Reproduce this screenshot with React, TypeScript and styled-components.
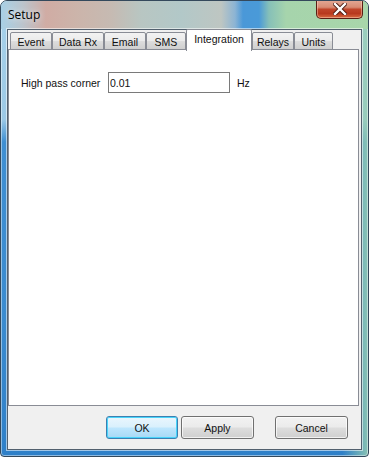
import React from "react";
import { useState } from "react";
import { styled, createGlobalStyle } from "styled-components";

const GlobalStyle = createGlobalStyle`
  html, body {
    margin: 0;
    padding: 0;
    background: #ffffff;
  }
  body {
    font-family: "Liberation Sans", Arial, sans-serif;
    font-size: 10.5px;
    color: #000000;
  }
`;

const Window = styled.div`
  position: relative;
  width: 369px;
  height: 457px;
  box-sizing: border-box;
  border: 1px solid #34495c;
  border-radius: 7px 7px 4px 4px;
  overflow: hidden;
  display: flex;
  flex-direction: column;
  background:
    linear-gradient(90deg, rgba(168, 212, 168, 0) 0, rgba(168, 212, 168, 0) 93%, rgba(150, 205, 175, 0.85) 100%),
    linear-gradient(180deg, #a8d2ea 0%, #9cc9e6 26%, #3f8fd2 31%, #3b8bcf 70%, #2f80c8 100%);
  box-shadow: inset 0 0 0 1px rgba(255, 255, 255, 0.45);
`;

const TitleBar = styled.div`
  height: 28px;
  flex: none;
  display: flex;
  align-items: flex-start;
  justify-content: space-between;
  padding-left: 7px;
  background: linear-gradient(
    90deg,
    #a8d0e6 0px,
    #bcc4cc 22px,
    #d0aca4 45px,
    #ccb4aa 75px,
    #c6bab2 110px,
    #b8c6c2 140px,
    #b2c8c8 180px,
    #bec6c2 220px,
    #8cb4d4 234px,
    #4a98d8 242px,
    #4a9ad8 258px,
    #86c0b8 268px,
    #a6d4ac 285px,
    #a8d6aa 369px
  );
`;

const Title = styled.span`
  font-family: "Open Sans", "Liberation Sans", sans-serif;
  font-size: 12px;
  line-height: 12px;
  color: #000000;
  margin-top: 8px;
  text-shadow: 0 0 6px rgba(255, 255, 255, 0.9);
`;

const CloseButton = styled.button`
  width: 47px;
  height: 19px;
  margin: -1px 5px 0 0;
  padding: 0;
  border: 1px solid #5a1f14;
  border-top: none;
  border-radius: 0 0 5px 5px;
  background: linear-gradient(
    180deg,
    #e3a996 0%,
    #d88c74 40%,
    #c0452a 52%,
    #b8391e 75%,
    #d86a40 100%
  );
  box-shadow: inset 0 0 0 1px rgba(255, 220, 200, 0.45);
  display: flex;
  align-items: center;
  justify-content: center;
  cursor: default;
`;

const Client = styled.div`
  flex: none;
  margin: 0 6px;
  height: 421px;
  box-sizing: border-box;
  border: 1px solid #52606e;
  background: #f0f0f0;
  box-shadow: 0 0 0 1px rgba(255, 255, 255, 0.55);
  display: flex;
  flex-direction: column;
`;

const TabStrip = styled.div`
  height: 20px;
  display: flex;
  align-items: flex-end;
  padding-left: 2px;
  position: relative;
  z-index: 1;
`;

const Tab = styled.div<{ $active?: boolean; $w: number }>`
  width: ${({ $w }) => $w}px;
  box-sizing: border-box;
  height: ${({ $active }) => ($active ? "22px" : "18px")};
  margin-bottom: ${({ $active }) => ($active ? "-1px" : "0")};
  border: 1px solid #898c95;
  border-bottom: ${({ $active }) => ($active ? "none" : "1px solid #898c95")};
  border-radius: 2px 2px 0 0;
  background: ${({ $active }) =>
    $active
      ? "#ffffff"
      : "linear-gradient(180deg, #f2f2f2 0%, #ebebeb 48%, #dddddd 52%, #cfcfcf 100%)"};
  display: flex;
  align-items: ${({ $active }) => ($active ? "flex-start" : "center")};
  justify-content: center;
  padding-top: ${({ $active }) => ($active ? "3px" : "1px")};
  font-size: 10.5px;
  color: #111111;
  white-space: nowrap;
  cursor: default;
`;

const Panel = styled.div`
  height: 357px;
  box-sizing: border-box;
  margin-right: 2px;
  margin-top: -1px;
  border: 1px solid #898c95;
  background: #ffffff;
  padding: 22px 0 0 12px;
`;

const FieldRow = styled.div`
  display: flex;
  align-items: center;
  height: 21px;
`;

const FieldLabel = styled.label`
  font-size: 10.5px;
  width: 87px;
  color: #111111;
`;

const TextInput = styled.input`
  width: 122px;
  height: 21px;
  box-sizing: border-box;
  border: 1px solid #7a7a7a;
  padding: 0 1px;
  font-family: "Liberation Sans", Arial, sans-serif;
  font-size: 10.5px;
  color: #111111;
  outline: none;
`;

const Unit = styled.span`
  font-size: 10.5px;
  margin-left: 7px;
  color: #111111;
`;

const ButtonRow = styled.div`
  display: flex;
  justify-content: flex-end;
  align-items: flex-start;
  padding: 10px 13px 0 0;
`;

const Button = styled.button<{ $default?: boolean; $gap?: number }>`
  width: ${({ $default }) => ($default ? "72px" : "73px")};
  height: 23px;
  margin-left: ${({ $gap }) => $gap ?? 0}px;
  box-sizing: border-box;
  border: 1px solid ${({ $default }) => ($default ? "#3c7fb1" : "#707070")};
  border-radius: 3px;
  background: ${({ $default }) =>
    $default
      ? "linear-gradient(180deg, #eaf6fd 0%, #d9f0fc 48%, #bee6fd 52%, #a7d9f5 100%)"
      : "linear-gradient(180deg, #f2f2f2 0%, #ebebeb 48%, #dddddd 52%, #cfcfcf 100%)"};
  box-shadow: inset 0 0 0 1px
    ${({ $default }) => ($default ? "#48d4fa" : "rgba(255, 255, 255, 0.7)")};
  font-family: "Liberation Sans", Arial, sans-serif;
  font-size: 10.5px;
  color: #111111;
  padding: 0;
  cursor: default;
`;

const tabs = [
  { label: "Event", w: 42 },
  { label: "Data Rx", w: 52 },
  { label: "Email", w: 42 },
  { label: "SMS", w: 40 },
  { label: "Integration", w: 66 },
  { label: "Relays", w: 42 },
  { label: "Units", w: 39 },
];

const CloseGlyph: React.FC = () => (
  <svg width="14" height="12" viewBox="0 0 14 12">
    <path
      d="M2 1 L12 11 M12 1 L2 11"
      stroke="#4a1a10"
      strokeWidth="4.2"
      strokeLinecap="square"
    />
    <path
      d="M2 1 L12 11 M12 1 L2 11"
      stroke="#ffffff"
      strokeWidth="2.4"
      strokeLinecap="square"
    />
  </svg>
);

const App: React.FC = () => {
  const [activeTab, setActiveTab] = useState<string>("Integration");
  const [corner, setCorner] = useState<string>("0.01");

  return (
    <>
      <GlobalStyle />
      <Window>
        <TitleBar>
          <Title>Setup</Title>
          <CloseButton aria-label="Close">
            <CloseGlyph />
          </CloseButton>
        </TitleBar>
        <Client>
          <TabStrip>
            {tabs.map((t) => (
              <Tab
                key={t.label}
                $w={t.w}
                $active={t.label === activeTab}
                onClick={() => setActiveTab(t.label)}
              >
                {t.label}
              </Tab>
            ))}
          </TabStrip>
          <Panel>
            <FieldRow>
              <FieldLabel>High pass corner</FieldLabel>
              <TextInput
                value={corner}
                onChange={(event) => setCorner(event.target.value)}
              />
              <Unit>Hz</Unit>
            </FieldRow>
          </Panel>
          <ButtonRow>
            <Button $default>OK</Button>
            <Button $gap={3}>Apply</Button>
            <Button $gap={21}>Cancel</Button>
          </ButtonRow>
        </Client>
      </Window>
    </>
  );
};

export default App;
